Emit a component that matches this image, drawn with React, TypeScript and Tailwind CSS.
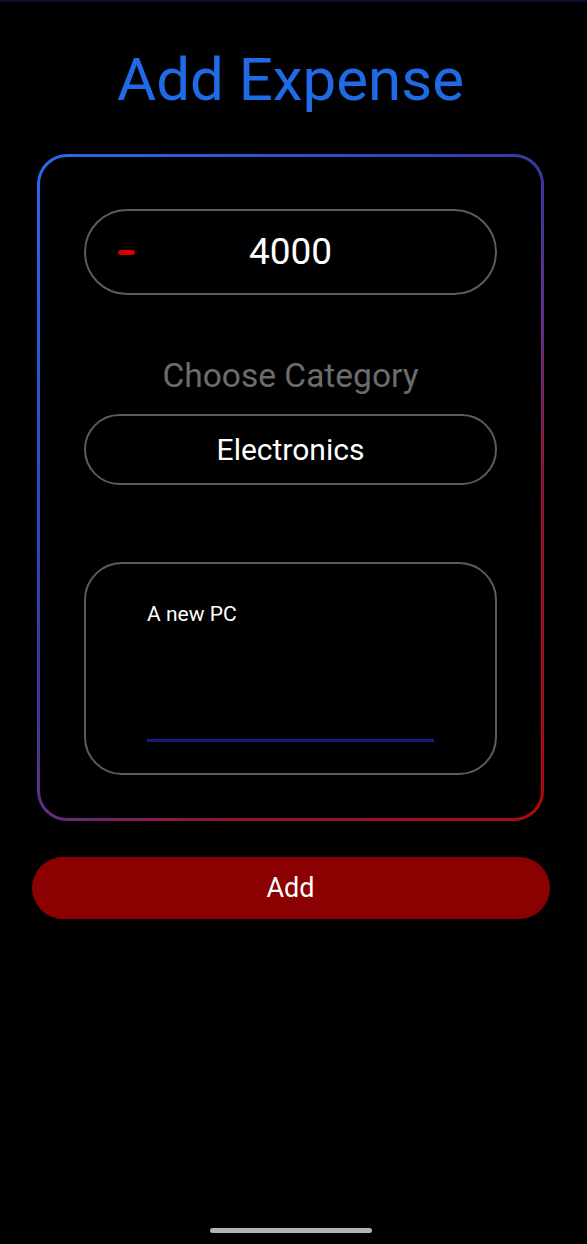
import React, { useState } from 'react';

const App: React.FC = () => {
  const [amount, setAmount] = useState('4000');
  const [note, setNote] = useState('A new PC');
  const category = 'Electronics';

  return (
    <div
      className="min-h-[1244px] w-full bg-black border-t-2 border-[#0b0b33] pr-[6px] flex flex-col items-center"
      style={{ fontFamily: 'Roboto, "Noto Sans", sans-serif' }}
    >
      {/* Title */}
      <h1 className="pt-[43px] text-[60px] leading-[70px] text-[#1f6be6]">Add Expense</h1>

      {/* Gradient-bordered card */}
      <div className="mt-[39px] w-[507px] rounded-[30px] p-[3px] bg-[linear-gradient(135deg,#2a6ae8_0%,#2a4cc4_28%,#36399c_43%,#5e2f86_57%,#8c1838_70%,#b00808_100%)]">
        <div className="rounded-[27px] bg-black px-[44px] pt-[52px] pb-[43px] flex flex-col">
          {/* Amount */}
          <div className="relative h-[86px] rounded-full border-2 border-[#5c5c5c] flex items-center justify-center">
            <span className="absolute left-[32px] top-[39px] h-[5px] w-[17px] rounded-full bg-[#d40000]" />
            <input
              value={amount}
              onChange={(e) => setAmount(e.target.value)}
              className="w-[200px] bg-transparent text-center text-[37px] leading-[44px] text-white outline-none"
            />
          </div>

          <p className="mt-[62px] text-center text-[33.5px] leading-[38px] text-[#6c6c6c]">Choose Category</p>

          {/* Category */}
          <button className="mt-[19px] h-[71px] rounded-full border-2 border-[#5c5c5c] flex items-center justify-center">
            <span className="text-[30px] leading-[35px] text-white">{category}</span>
          </button>

          {/* Note */}
          <div className="mt-[77px] h-[213px] rounded-[38px] border-2 border-[#5c5c5c] px-[61px] pt-[38px] pb-[31px] flex flex-col justify-between">
            <input
              value={note}
              onChange={(e) => setNote(e.target.value)}
              className="bg-transparent text-[21px] leading-[25px] text-white outline-none"
            />
            <div className="h-[3px] bg-[#1a1a80]" />
          </div>
        </div>
      </div>

      {/* Submit */}
      <button className="mt-[36px] h-[62px] w-[518px] rounded-full bg-[#8b0000] text-[27px] text-white">
        Add
      </button>

      {/* Home indicator */}
      <div className="mt-auto mb-[11px] h-[5px] w-[162px] rounded-full bg-[#b3b3b3]" />
    </div>
  );
};

export default App;
